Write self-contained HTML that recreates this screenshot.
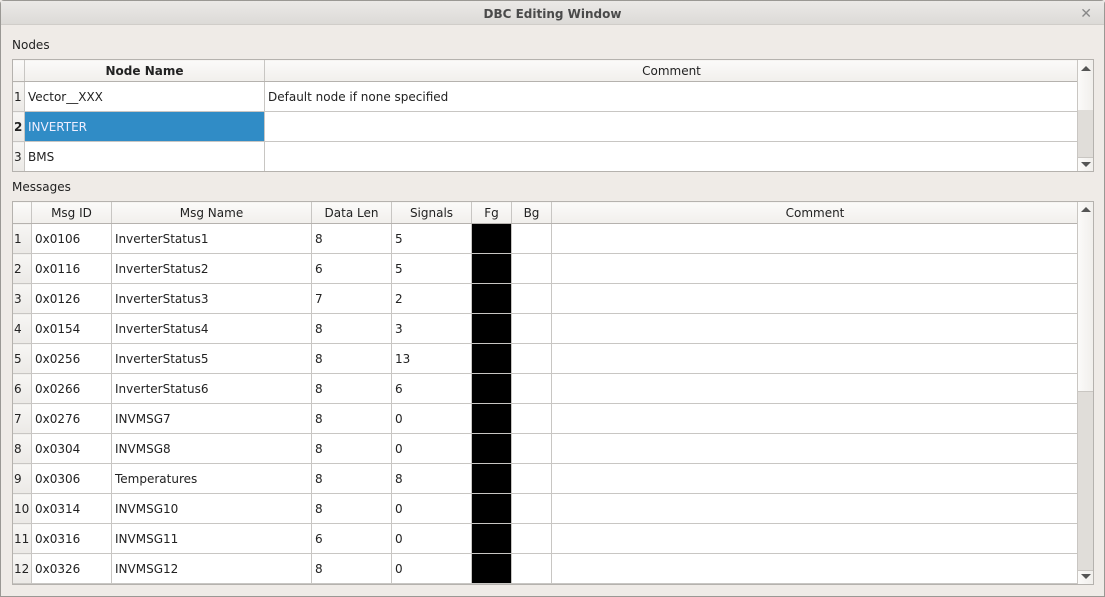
<!DOCTYPE html><html><head><style>
*{box-sizing:border-box;margin:0;padding:0}
body{width:1105px;height:597px;overflow:hidden;background:#efebe7;font-family:"DejaVu Sans","Liberation Sans",sans-serif;font-size:12px;color:#222;position:relative}
.win{position:absolute;left:0;top:0;width:1105px;height:597px;border:1px solid #9a9894;border-radius:4px 4px 0 0}
.title{position:absolute;left:1px;top:1px;width:1103px;height:24px;background:linear-gradient(#ebe9e7,#dcdad7);border-bottom:1px solid #d0cdc9;text-align:center;font-weight:bold;line-height:26px;color:#4a4a4a;font-size:12px}
.x{position:absolute;right:12px;top:0;color:#888;font-size:14px}
.lbl{position:absolute;left:12px}
table{position:absolute;border-collapse:collapse;table-layout:fixed;background:#fff}
td,th{border:1px solid #c8c6c3;overflow:hidden;white-space:nowrap;padding:0 3px;text-align:left;font-weight:normal}
th{background:linear-gradient(#fbfaf9,#f1efec);text-align:center;border-bottom:1px solid #b5b2ae}
td.rh{background:linear-gradient(#f7f6f4,#ebe9e6);padding:0 1px;font-size:12px}
.outer{position:absolute;border:1px solid #b5b2ae}
.sb{position:absolute;width:16px;background:#e0ddd9;border-left:1px solid #c9c6c2}
.sbl{position:absolute;left:0;width:15px;background:linear-gradient(90deg,#fbfaf9,#f1efec)}
.ar{position:absolute;left:3px;width:0;height:0;border-left:5px solid transparent;border-right:5px solid transparent}
.fg{background:#000}
</style></head><body>
<div class="win"></div>
<div class="title">DBC Editing Window<span class="x">✕</span></div>
<div class="lbl" style="top:38px">Nodes</div>
<div class="outer" style="left:12px;top:59px;width:1082px;height:113px;overflow:hidden">
<table style="left:-1px;top:-1px;width:1066px">
<colgroup><col style="width:12px"><col style="width:240px"><col style="width:814px"></colgroup>
<tr style="height:22px"><th style="border-left:0"></th><th style="font-weight:bold">Node Name</th><th>Comment</th></tr>
<tr style="height:30px"><td class="rh">1</td><td>Vector__XXX</td><td>Default node if none specified</td></tr>
<tr style="height:30px"><td class="rh" style="font-weight:bold">2</td><td style="background:#308cc6;color:#eef">INVERTER</td><td></td></tr>
<tr style="height:30px"><td class="rh">3</td><td>BMS</td><td></td></tr>
</table>
</div>
<div class="sb" style="left:1077px;top:60px;height:111px">
<div class="sbl" style="top:0;height:50px"></div>
<div class="ar" style="top:6px;border-bottom:5px solid #555"></div>
<div class="sbl" style="top:97px;height:14px;border-top:1px solid #c9c6c2"></div>
<div class="ar" style="top:102px;border-top:5px solid #555"></div>
</div>
<div class="lbl" style="top:180px">Messages</div>
<div class="outer" style="left:12px;top:201px;width:1082px;height:384px;overflow:hidden">
<table style="left:-1px;top:-1px;width:1066px">
<colgroup><col style="width:19px"><col style="width:80px"><col style="width:200px"><col style="width:80px"><col style="width:80px"><col style="width:40px"><col style="width:40px"><col style="width:527px"></colgroup>
<tr style="height:22px"><th style="border-left:0"></th><th>Msg ID</th><th>Msg Name</th><th>Data Len</th><th>Signals</th><th>Fg</th><th>Bg</th><th>Comment</th></tr>
<tr style="height:30px"><td class="rh">1</td><td>0x0106</td><td>InverterStatus1</td><td>8</td><td>5</td><td class="fg"></td><td></td><td></td></tr>
<tr style="height:30px"><td class="rh">2</td><td>0x0116</td><td>InverterStatus2</td><td>6</td><td>5</td><td class="fg"></td><td></td><td></td></tr>
<tr style="height:30px"><td class="rh">3</td><td>0x0126</td><td>InverterStatus3</td><td>7</td><td>2</td><td class="fg"></td><td></td><td></td></tr>
<tr style="height:30px"><td class="rh">4</td><td>0x0154</td><td>InverterStatus4</td><td>8</td><td>3</td><td class="fg"></td><td></td><td></td></tr>
<tr style="height:30px"><td class="rh">5</td><td>0x0256</td><td>InverterStatus5</td><td>8</td><td>13</td><td class="fg"></td><td></td><td></td></tr>
<tr style="height:30px"><td class="rh">6</td><td>0x0266</td><td>InverterStatus6</td><td>8</td><td>6</td><td class="fg"></td><td></td><td></td></tr>
<tr style="height:30px"><td class="rh">7</td><td>0x0276</td><td>INVMSG7</td><td>8</td><td>0</td><td class="fg"></td><td></td><td></td></tr>
<tr style="height:30px"><td class="rh">8</td><td>0x0304</td><td>INVMSG8</td><td>8</td><td>0</td><td class="fg"></td><td></td><td></td></tr>
<tr style="height:30px"><td class="rh">9</td><td>0x0306</td><td>Temperatures</td><td>8</td><td>8</td><td class="fg"></td><td></td><td></td></tr>
<tr style="height:30px"><td class="rh">10</td><td>0x0314</td><td>INVMSG10</td><td>8</td><td>0</td><td class="fg"></td><td></td><td></td></tr>
<tr style="height:30px"><td class="rh">11</td><td>0x0316</td><td>INVMSG11</td><td>6</td><td>0</td><td class="fg"></td><td></td><td></td></tr>
<tr style="height:30px"><td class="rh">12</td><td>0x0326</td><td>INVMSG12</td><td>8</td><td>0</td><td class="fg"></td><td></td><td></td></tr>
<tr style="height:30px"><td class="rh"></td><td></td><td></td><td></td><td></td><td class="fg"></td><td></td><td></td></tr>
</table>
</div>
<div class="sb" style="left:1077px;top:202px;height:382px">
<div class="sbl" style="top:0;height:190px;border-bottom:1px solid #c9c6c2"></div>
<div class="ar" style="top:5px;border-bottom:5px solid #555"></div>
<div class="sbl" style="top:368px;height:14px;border-top:1px solid #c9c6c2"></div>
<div class="ar" style="top:372px;border-top:5px solid #555"></div>
</div>
</body></html>
